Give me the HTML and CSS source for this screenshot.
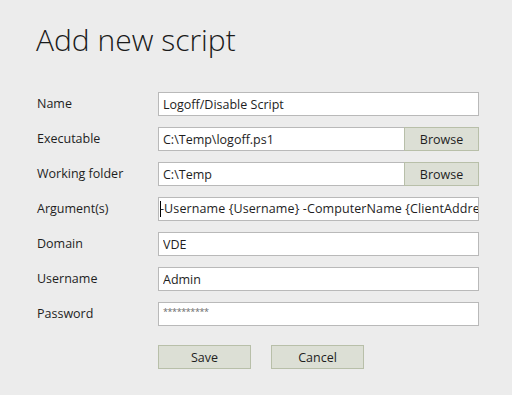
FILE: index.html
```html
<!DOCTYPE html>
<html lang="en">
<head>
  <meta charset="UTF-8">
  <meta name="viewport" content="width=device-width, initial-scale=1.0">
  <title>Add new script</title>
  <link rel="stylesheet" href="styles.css">
</head>
<body>

  <div class="dialog">
    <h1 class="title">Add new script</h1>

    <form class="script-form">
      <label class="field-label">Name</label>
      <div class="field">
        <input class="text-input" type="text" value="Logoff/Disable Script">
      </div>

      <label class="field-label">Executable</label>
      <div class="field">
        <input class="text-input" type="text" value="C:\Temp\logoff.ps1">
        <button type="button" class="browse-btn">Browse</button>
      </div>

      <label class="field-label">Working folder</label>
      <div class="field">
        <input class="text-input" type="text" value="C:\Temp">
        <button type="button" class="browse-btn">Browse</button>
      </div>

      <label class="field-label">Argument(s)</label>
      <div class="field">
        <div class="text-input focused"><span class="caret"></span>-Username {Username} -ComputerName {ClientAddress}</div>
      </div>

      <label class="field-label">Domain</label>
      <div class="field">
        <input class="text-input" type="text" value="VDE">
      </div>

      <label class="field-label">Username</label>
      <div class="field">
        <input class="text-input" type="text" value="Admin">
      </div>

      <label class="field-label">Password</label>
      <div class="field">
        <div class="text-input password">**********</div>
      </div>

      <div class="actions">
        <button type="button" class="action-btn">Save</button>
        <button type="button" class="action-btn">Cancel</button>
      </div>
    </form>
  </div>

</body>
</html>
```

FILE: styles.css
```css
body {
  margin: 0;
  background-color: #ececec;
  font-family: "Open Sans", Arial, sans-serif;
  color: #1e1e1e;
}

.dialog {
  padding: 19px 33px 0 36px;
}

.title {
  margin: 0 0 31px 0;
  font-size: 30px;
  font-weight: 300;
  line-height: 42px;
  color: #1a1a1a;
}

/* Two column form: labels on the left, inputs on the right */
.script-form {
  display: grid;
  grid-template-columns: 122px 321px;
  row-gap: 11px;
  align-items: center;
}

.field-label {
  font-size: 12.5px;
  padding-left: 1px;
  padding-bottom: 2px;
}

.field {
  display: flex;
  height: 24px;
}

.text-input {
  flex: 1;
  min-width: 0;
  box-sizing: border-box;
  height: 24px;
  margin: 0;
  padding: 0 4px;
  border: 1px solid #b9b9b9;
  background-color: #ffffff;
  font-family: "Open Sans", Arial, sans-serif;
  font-size: 12.5px;
  color: #1e1e1e;
  line-height: 22px;
  outline: none;
  white-space: nowrap;
  overflow: hidden;
}

.focused {
  padding-left: 1px;
  letter-spacing: 0.1px;
}

.caret {
  display: inline-block;
  width: 1px;
  height: 16px;
  margin-right: -1px;
  vertical-align: -4px;
  background-color: #000000;
}

.password {
  font-size: 9px;
  letter-spacing: -0.4px;
  color: #6a6a6a;
  line-height: 18px;
}

.browse-btn {
  width: 75px;
  height: 24px;
  margin: 0;
  margin-left: -1px;
  border: 1px solid #b8bfa9;
  background-color: #dcdfd5;
  font-family: "Open Sans", Arial, sans-serif;
  font-size: 12.5px;
  color: #1e1e1e;
  padding: 0;
}

.actions {
  grid-column: 2;
  display: flex;
  gap: 20px;
  margin-top: 8px;
}

.action-btn {
  width: 93px;
  height: 24px;
  border: 1px solid #b8bfa9;
  background-color: #dcdfd5;
  font-family: "Open Sans", Arial, sans-serif;
  font-size: 12.5px;
  color: #1e1e1e;
  padding: 0;
}
```
